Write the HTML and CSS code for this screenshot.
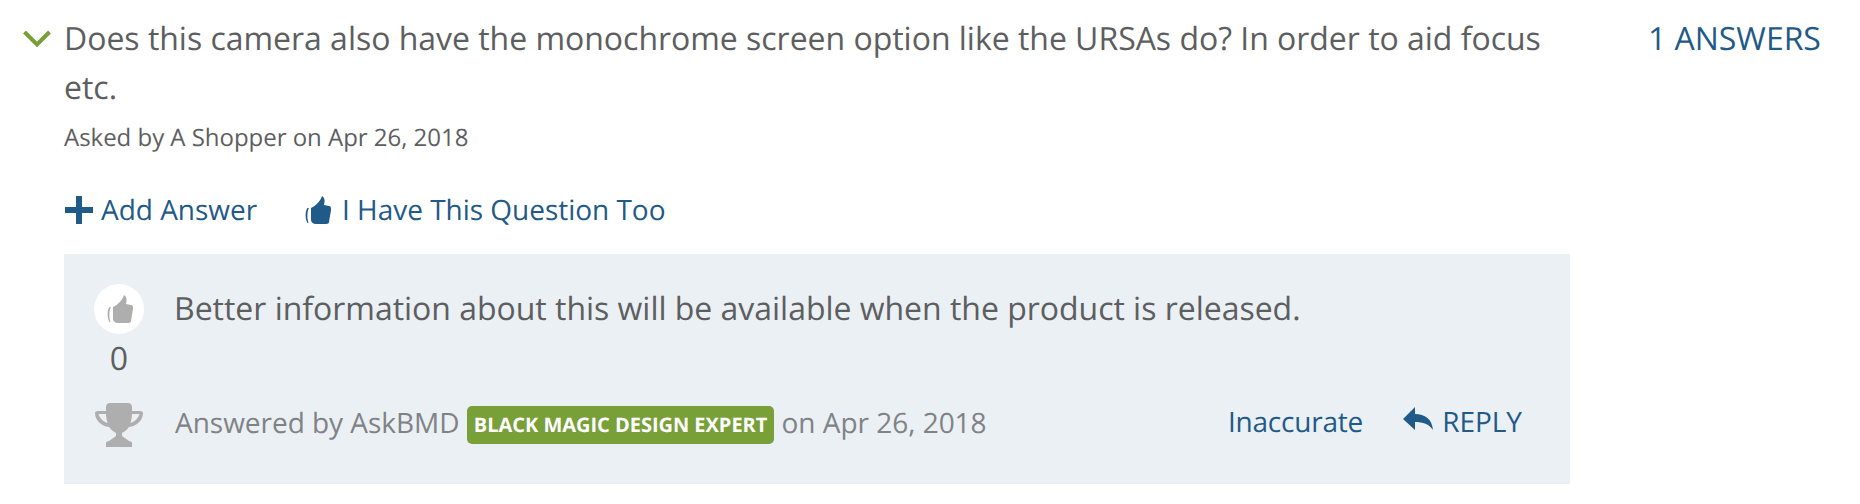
FILE: index.html
```html
<!DOCTYPE html>
<html lang="en">
<head>
<meta charset="utf-8">
<title>Question</title>
<link rel="stylesheet" href="styles.css">
</head>
<body>
<div class="qa">
  <svg class="chevron" viewBox="0 0 28 18"><path d="M1.5 3L14 15.5 26.5 3" fill="none" stroke="#789f38" stroke-width="4"/></svg>
  <div class="main">
    <div class="question">Does this camera also have the monochrome screen option like the URSAs do? In order to aid focus etc.</div>
    <div class="meta">Asked by A Shopper on Apr 26, 2018</div>
    <div class="actions">
      <a class="action add"><svg class="i-plus" viewBox="0 0 28 28"><path d="M0 14h28M14 0v28" stroke="#1f5a88" stroke-width="6" fill="none"/></svg>Add Answer</a>
      <a class="action too"><svg class="i-thumb" viewBox="0 0 27 28"><path fill="#1f5a88" d="M3.5 12C1 15 1 23 3.5 27h1C3 23 3 15 5 12zM7 12c4-2 9-6 11-12 3 2 3 5 2 9l5 1c2 0 2 2 2 4l-2 12c0 1-1 2-3 2H12c-3 0-5-2-5-4z"/></svg>I Have This Question Too</a>
    </div>
    <div class="answer">
      <div class="answer-top">
        <div class="vote">
          <span class="vote-circle"><svg class="i-thumb-grey" viewBox="0 0 27 28"><path fill="#aeaeae" d="M3.5 12C1 15 1 23 3.5 27h1C3 23 3 15 5 12zM7 12c4-2 9-6 11-12 3 2 3 5 2 9l5 1c2 0 2 2 2 4l-2 12c0 1-1 2-3 2H12c-3 0-5-2-5-4z"/></svg></span>
          <span class="vote-count">0</span>
        </div>
        <div class="answer-text">Better information about this will be available when the product is released.</div>
      </div>
      <div class="answer-foot">
        <svg class="i-trophy" viewBox="0 0 48 44"><path fill="#aeaeae" d="M11 4c0-3 2-4 4-4h18c2 0 4 1 4 4v4h8c2 0 3 1 3 2 0 7-6 13-14 14-2 3-5 5-7 6v3l7 5c2 0 3 1 3 2v4H11v-4c0-1 1-2 3-2l7-5v-3c-2-1-5-3-7-6C6 23 0 17 0 10c0-1 1-2 3-2h8zM3.500 11c1 4 5 8 9 9-1-3-1.500-6-1.500-9zm41 0H37c0 3-.500 6-1.500 9 4-1 8-5 9-9z"/></svg>
        <div class="answered">Answered by AskBMD <span class="badge">BLACK MAGIC DESIGN EXPERT</span> on Apr 26, 2018</div>
        <div class="foot-links">
          <a class="foot-link inaccurate">Inaccurate</a>
          <a class="foot-link"><svg class="i-reply" viewBox="0 0 30 23"><path fill="#1f5a88" d="M0 12L12 0v7c10 0 17 5 18 16-4-6-10-8-18-8v8z"/></svg>REPLY</a>
        </div>
      </div>
    </div>
  </div>
  <a class="count">1 ANSWERS</a>
</div>
</body>
</html>
```
FILE: styles.css
```css
* { box-sizing: border-box; }
html, body { margin: 0; background: #fff; }
body { font-family: "Open Sans", sans-serif; color: #5d5e60; width: 1860px; height: 504px; overflow: hidden; text-rendering: geometricPrecision; letter-spacing: -0.025px; }
a { color: #1f5a88; }
.qa { display: flex; align-items: flex-start; padding: 14px 0 0 23px; }
.chevron { width: 28px; height: 18px; margin: 15px 13px 0 0; flex: none; }
.main { width: 1506px; flex: none; }
.question { font-size: 32px; line-height: 49px; width: 1506px; }
.meta { font-size: 24px; line-height: 34px; margin-top: 9px; }
.actions { display: flex; align-items: center; margin-top: 35px; height: 40px; font-size: 28px; }
.action { display: flex; align-items: center; }
.add { margin-right: 47px; }
.i-plus { width: 28px; height: 28px; margin: 0 8px 0 1px; }
.i-thumb { width: 27px; height: 28px; margin-right: 11px; }
.answer { background: #ebf0f5; height: 230px; margin-top: 24px; padding: 30px 48px 0 30px; }
.answer-top { display: flex; align-items: flex-start; }
.vote { width: 50px; display: flex; flex-direction: column; align-items: center; flex: none; margin-right: 30px; }
.vote-circle { width: 50px; height: 50px; border-radius: 50%; background: #fff; display: flex; align-items: center; justify-content: center; }
.i-thumb-grey { width: 27px; height: 28px; }
.vote-count { font-size: 32px; line-height: 44px; margin-top: 3px; }
.answer-text { font-size: 32px; line-height: 46px; margin-top: 2px; }
.answer-foot { display: flex; align-items: center; margin-top: 18px; height: 50px; }
.i-trophy { width: 48px; height: 44px; margin: 2px 32px 0 1px; flex: none; }
.answered { font-size: 28px; color: #808285; }
.badge { display: inline-block; background: #789f38; color: #fff; font-size: 20px; font-weight: 700; line-height: 38px; padding: 0 7px; border-radius: 5px; vertical-align: 1px; }
.foot-links { margin-left: auto; display: flex; align-items: center; gap: 40px; font-size: 28px; margin-top: -4px; }
.foot-link { display: flex; align-items: center; }
.inaccurate { letter-spacing: -0.2px; }
.i-reply { width: 30px; height: 23px; margin: -8px 9px 0 0; }
.count { font-size: 32px; line-height: 49px; margin-left: 78px; white-space: nowrap; }
```
